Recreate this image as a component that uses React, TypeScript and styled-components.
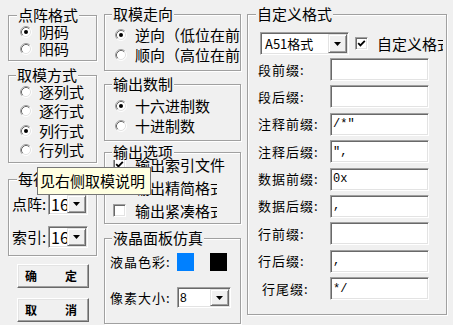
import React from 'react';
import styled, { createGlobalStyle } from 'styled-components';

const FONT = `"Noto Sans CJK SC", "Noto Sans", sans-serif`;

const Global = createGlobalStyle`
  html, body { margin: 0; padding: 0; background: #f0f0f0; }
  body { font-family: ${FONT}; }
`;

const Window = styled.div`
  position: relative;
  width: 453px;
  height: 325px;
  box-sizing: border-box;
  padding-left: 8px;
  background: #f0f0f0;
  display: flex;
  align-items: flex-start;
  font-family: ${FONT};
  font-size: 15px;
  color: #000;
  overflow: hidden;
`;

const Column = styled.div<{ $w: number; $ml?: number }>`
  width: ${(p) => p.$w}px;
  margin-left: ${(p) => p.$ml ?? 0}px;
  padding-top: 14px;
  display: flex;
  flex-direction: column;
  flex: none;
`;

const Group = styled.div<{ $h: number; $mt?: number; $pt: number; $pl: number; $gap?: number }>`
  position: relative;
  box-sizing: border-box;
  height: ${(p) => p.$h}px;
  margin-top: ${(p) => p.$mt ?? 0}px;
  padding: ${(p) => p.$pt}px 0 0 ${(p) => p.$pl}px;
  border: 1px solid #a0a0a0;
  box-shadow: 1px 1px 0 #fff, inset 1px 1px 0 #fff;
  display: flex;
  flex-direction: column;
  gap: ${(p) => p.$gap ?? 0}px;
`;

const Title = styled.span<{ $l?: number; $max?: number }>`
  position: absolute;
  top: -9px;
  left: ${(p) => p.$l ?? 7}px;
  padding: 0 1px;
  background: #f0f0f0;
  line-height: 16px;
  white-space: nowrap;
  overflow: hidden;
  max-width: ${(p) => p.$max ?? 300}px;
`;

const OptionRow = styled.div<{ $h: number }>`
  display: flex;
  align-items: center;
  height: ${(p) => p.$h}px;
  line-height: 16px;
  white-space: nowrap;
  overflow: hidden;
  flex: none;
`;

const OptionText = styled.span<{ $gap: number; $clip?: number }>`
  margin-left: ${(p) => p.$gap}px;
  overflow: hidden;
  flex: none;
  ${(p) => (p.$clip ? `width: ${p.$clip}px;` : '')}
`;

const RadioSvg = styled.svg`
  flex: none;
  display: block;
`;

const Radio = ({ checked }: { checked?: boolean }) => (
  <RadioSvg width={12} height={12} viewBox="0 0 12 12">
    <circle cx="6" cy="6" r="5" fill="#fff" />
    <path d="M2.11 9.89 A5.5 5.5 0 0 1 9.89 2.11" fill="none" stroke="#a0a0a0" strokeWidth="1" />
    <path d="M9.89 2.11 A5.5 5.5 0 0 1 2.11 9.89" fill="none" stroke="#ffffff" strokeWidth="1" />
    <path d="M2.82 9.18 A4.5 4.5 0 0 1 9.18 2.82" fill="none" stroke="#696969" strokeWidth="1" />
    <path d="M9.18 2.82 A4.5 4.5 0 0 1 2.82 9.18" fill="none" stroke="#e3e3e3" strokeWidth="1" />
    {checked && <circle cx="6" cy="6" r="2" fill="#000" />}
  </RadioSvg>
);

const CheckBoxFrame = styled.span<{ $ml?: number }>`
  flex: none;
  width: 13px;
  height: 13px;
  margin-left: ${(p) => p.$ml ?? 0}px;
  box-sizing: border-box;
  background: #fff;
  border: 1px solid;
  border-color: #a0a0a0 #fff #fff #a0a0a0;
  box-shadow: inset 1px 1px 0 #696969, inset -1px -1px 0 #e3e3e3;
  display: flex;
  align-items: center;
  justify-content: center;
`;

const CheckBox = ({ checked, ml }: { checked?: boolean; ml?: number }) => (
  <CheckBoxFrame $ml={ml}>
    {checked && (
      <svg width={9} height={9} viewBox="0 0 9 9">
        <path d="M1.2 4.2 L3.4 6.4 L7.8 1.8" fill="none" stroke="#000" strokeWidth="1.8" />
      </svg>
    )}
  </CheckBoxFrame>
);

const Combo = styled.div<{ $w: number; $h: number; $fs: number; $ff?: string; $ml?: number }>`
  flex: none;
  display: flex;
  align-items: stretch;
  width: ${(p) => p.$w}px;
  height: ${(p) => p.$h}px;
  margin-left: ${(p) => p.$ml ?? 0}px;
  box-sizing: border-box;
  padding: 1px;
  background: #fff;
  border: 1px solid;
  border-color: #a0a0a0 #fff #fff #a0a0a0;
  box-shadow: inset 1px 1px 0 #696969, inset -1px -1px 0 #e3e3e3;
  font-size: ${(p) => p.$fs}px;
  font-family: ${(p) => p.$ff ?? FONT};
`;

const ComboText = styled.span<{ $pl: number }>`
  flex: 1;
  padding-left: ${(p) => p.$pl}px;
  display: flex;
  align-items: center;
  white-space: nowrap;
  overflow: hidden;
`;

const DropButton = styled.span<{ $w: number }>`
  flex: none;
  width: ${(p) => p.$w}px;
  box-sizing: border-box;
  background: #f0f0f0;
  border: 1px solid;
  border-color: #e3e3e3 #696969 #696969 #e3e3e3;
  box-shadow: inset 1px 1px 0 #fff, inset -1px -1px 0 #a0a0a0;
  display: flex;
  align-items: center;
  justify-content: center;
`;

const Arrow = () => (
  <svg width={7} height={4} viewBox="0 0 7 4">
    <path d="M0 0 H7 L3.5 4 Z" fill="#000" />
  </svg>
);

const FieldLabel = styled.span<{ $w: number; $fs?: number; $pl?: number }>`
  flex: none;
  width: ${(p) => p.$w}px;
  box-sizing: border-box;
  padding-left: ${(p) => p.$pl ?? 0}px;
  font-size: ${(p) => p.$fs ?? 13}px;
  letter-spacing: ${(p) => ((p.$fs ?? 13) <= 13 ? 1 : 0)}px;
  white-space: nowrap;
  line-height: 16px;
`;

const PushButton = styled.button<{ $mt: number }>`
  width: 72px;
  height: 24px;
  margin: ${(p) => p.$mt}px 0 0 9px;
  box-sizing: border-box;
  padding: 0 11px 0 7px;
  background: #f0f0f0;
  border: 1px solid;
  border-color: #fff #696969 #696969 #fff;
  box-shadow: inset -1px -1px 0 #a0a0a0, inset 1px 1px 0 #e3e3e3;
  font-family: ${FONT};
  font-size: 12px;
  font-weight: bold;
  color: #000;
  display: flex;
  align-items: center;
  justify-content: space-between;
  line-height: 14px;
`;

const ColorSwatch = styled.span<{ $c: string; $ml?: number }>`
  flex: none;
  width: 17px;
  height: 18px;
  margin-left: ${(p) => p.$ml ?? 0}px;
  background: ${(p) => p.$c};
`;

const ComboRow = styled.div`
  display: flex;
  align-items: center;
  height: 23px;
  margin-left: 2px;
  overflow: hidden;
  white-space: nowrap;
  flex: none;
`;

const FieldList = styled.div`
  margin-top: 3px;
  display: flex;
  flex-direction: column;
  gap: 4.375px;
`;

const FieldRow = styled.div<{ $h: number; $mt?: number }>`
  display: flex;
  align-items: center;
  height: ${(p) => p.$h}px;
  margin-top: ${(p) => p.$mt ?? 0}px;
  flex: none;
`;

const TextInput = styled.div`
  flex: none;
  width: 99px;
  height: 23px;
  box-sizing: border-box;
  padding: 1px 1px 1px 2px;
  background: #fff;
  border: 1px solid;
  border-color: #a0a0a0 #fff #fff #a0a0a0;
  box-shadow: inset 1px 1px 0 #696969, inset -1px -1px 0 #e3e3e3;
  font-family: "Liberation Mono", "DejaVu Sans Mono", monospace;
  font-size: 12px;
  display: flex;
  align-items: center;
  white-space: pre;
`;

const Tooltip = styled.div`
  position: absolute;
  left: 37px;
  top: 167px;
  width: 114px;
  height: 28px;
  box-sizing: border-box;
  padding-left: 2px;
  background: #ffffe1;
  border: 1px solid #767676;
  font-size: 15px;
  line-height: 26px;
  white-space: nowrap;
  color: #000;
`;

const fields: { label: string; value: string; pl?: number }[] = [
  { label: '段前缀:', value: '' },
  { label: '段后缀:', value: '' },
  { label: '注释前缀:', value: '/*"' },
  { label: '注释后缀:', value: '",' },
  { label: '数据前缀:', value: '0x' },
  { label: '数据后缀:', value: ',' },
  { label: '行前缀:', value: '' },
  { label: '行后缀:', value: ',' },
  { label: '行尾缀:', value: '*/', pl: 4 },
];

export default function App() {
  return (
    <>
      <Global />
      <Window>
        <Column $w={89}>
          <Group $h={46} $mt={1} $pt={7} $pl={11}>
            <Title $l={8}>点阵格式</Title>
            <OptionRow $h={17}><Radio checked /><OptionText $gap={7}>阴码</OptionText></OptionRow>
            <OptionRow $h={17}><Radio /><OptionText $gap={7}>阳码</OptionText></OptionRow>
          </Group>
          <Group $h={88} $mt={14} $pt={6} $pl={11}>
            <Title $l={7}>取模方式</Title>
            <OptionRow $h={19.5}><Radio /><OptionText $gap={7}>逐列式</OptionText></OptionRow>
            <OptionRow $h={19.5}><Radio /><OptionText $gap={7}>逐行式</OptionText></OptionRow>
            <OptionRow $h={19.5}><Radio checked /><OptionText $gap={7}>列行式</OptionText></OptionRow>
            <OptionRow $h={19.5}><Radio /><OptionText $gap={7}>行列式</OptionText></OptionRow>
          </Group>
          <Group $h={77} $mt={16} $pt={13} $pl={3} $gap={11}>
            <Title $l={8} $max={80}>每行显示数据</Title>
            <FieldRow $h={22}>
              <FieldLabel $w={36} $fs={15}>点阵:</FieldLabel>
              <Combo $w={40} $h={22} $fs={16}>
                <ComboText $pl={1}>16</ComboText>
                <DropButton $w={19}><Arrow /></DropButton>
              </Combo>
            </FieldRow>
            <FieldRow $h={22}>
              <FieldLabel $w={36} $fs={15}>索引:</FieldLabel>
              <Combo $w={40} $h={22} $fs={16}>
                <ComboText $pl={1}>16</ComboText>
                <DropButton $w={19}><Arrow /></DropButton>
              </Combo>
            </FieldRow>
          </Group>
          <PushButton $mt={8}><span>确</span><span>定</span></PushButton>
          <PushButton $mt={10}><span>取</span><span>消</span></PushButton>
        </Column>

        <Column $w={137} $ml={7}>
          <Group $h={57} $pt={10} $pl={10}>
            <Title $l={7}>取模走向</Title>
            <OptionRow $h={20}><Radio checked /><OptionText $gap={8}>逆向（低位在前）</OptionText></OptionRow>
            <OptionRow $h={20}><Radio /><OptionText $gap={8}>顺向（高位在前）</OptionText></OptionRow>
          </Group>
          <Group $h={57} $mt={13} $pt={11} $pl={10}>
            <Title $l={7}>输出数制</Title>
            <OptionRow $h={20}><Radio checked /><OptionText $gap={8}>十六进制数</OptionText></OptionRow>
            <OptionRow $h={20}><Radio /><OptionText $gap={8}>十进制数</OptionText></OptionRow>
          </Group>
          <Group $h={72} $mt={11} $pt={0} $pl={8}>
            <Title $l={7}>输出选项</Title>
            <OptionRow $h={23}><CheckBox checked /><OptionText $gap={9}>输出索引文件</OptionText></OptionRow>
            <OptionRow $h={23}><CheckBox checked /><OptionText $gap={9} $clip={82}>输出精简格式</OptionText></OptionRow>
            <OptionRow $h={23}><CheckBox /><OptionText $gap={9} $clip={82}>输出紧凑格式</OptionText></OptionRow>
          </Group>
          <Group $h={86} $mt={14} $pt={14} $pl={5}>
            <Title $l={7}>液晶面板仿真</Title>
            <FieldRow $h={18}>
              <FieldLabel $w={67}>液晶色彩:</FieldLabel>
              <ColorSwatch $c="#0080ff" />
              <ColorSwatch $c="#000000" $ml={16} />
            </FieldRow>
            <FieldRow $h={21} $mt={16}>
              <FieldLabel $w={67}>像素大小:</FieldLabel>
              <Combo $w={54} $h={21} $fs={12} $ff={`"Liberation Sans", sans-serif`}>
                <ComboText $pl={1}>8</ComboText>
                <DropButton $w={19}><Arrow /></DropButton>
              </Combo>
            </FieldRow>
          </Group>
        </Column>

        <Column $w={200} $ml={6}>
          <Group $h={301} $pt={17} $pl={10}>
            <Title $l={8}>自定义格式</Title>
            <ComboRow>
              <Combo $w={89} $h={23} $fs={13}>
                <ComboText $pl={3}>A51格式</ComboText>
                <DropButton $w={19}><Arrow /></DropButton>
              </Combo>
              <CheckBox checked ml={6} />
              <OptionText $gap={9} $clip={66}>自定义格式</OptionText>
            </ComboRow>
            <FieldList>
              {fields.map((f) => (
                <FieldRow key={f.label} $h={23}>
                  <FieldLabel $w={72} $pl={f.pl}>{f.label}</FieldLabel>
                  <TextInput>{f.value}</TextInput>
                </FieldRow>
              ))}
            </FieldList>
          </Group>
        </Column>

        <Tooltip>见右侧取模说明</Tooltip>
      </Window>
    </>
  );
}
